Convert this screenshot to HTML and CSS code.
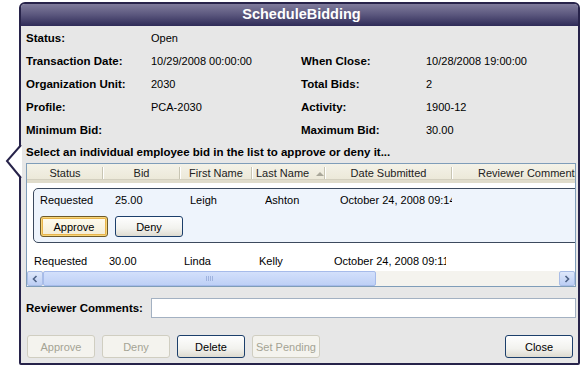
FILE: index.html
```html
<!DOCTYPE html>
<html>
<head>
<meta charset="utf-8">
<link rel="stylesheet" href="styles.css">
</head>
<body>
<div class="window">
  <svg class="callout" width="20" height="40" viewBox="0 0 20 40">
    <polygon points="17,0 3,16 17,33" fill="#ffffff" stroke="none"/>
    <polyline points="16,0 2,16 16,33" fill="none" stroke="#27234a" stroke-width="2"/>
  </svg>
  <div class="titlebar">ScheduleBidding</div>
  <div class="content">
    <div class="info">
      <span class="lbl">Status:</span><span>Open</span><span></span><span></span>
      <span class="lbl">Transaction Date:</span><span>10/29/2008 00:00:00</span><span class="lbl">When Close:</span><span>10/28/2008 19:00:00</span>
      <span class="lbl">Organization Unit:</span><span>2030</span><span class="lbl">Total Bids:</span><span>2</span>
      <span class="lbl">Profile:</span><span>PCA-2030</span><span class="lbl">Activity:</span><span>1900-12</span>
      <span class="lbl">Minimum Bid:</span><span></span><span class="lbl">Maximum Bid:</span><span>30.00</span>
    </div>
    <div class="hint">Select an individual employee bid in the list to approve or deny it...</div>
    <div class="grid">
      <div class="ghead">
        <div class="hc c1">Status</div>
        <div class="hc c2">Bid</div>
        <div class="hc c3">First Name</div>
        <div class="hc c4">Last Name <span class="sort"></span></div>
        <div class="hc c5">Date Submitted</div>
        <div class="hc c6">Reviewer Comments</div>
      </div>
      <div class="gbody">
        <div class="selrow">
          <div class="cells">
            <span class="cell">Requested</span><span class="cell">25.00</span><span class="cell">Leigh</span><span class="cell">Ashton</span><span class="cell date">October 24, 2008 09:14</span>
          </div>
          <div class="rowbtns">
            <button class="btn focus">Approve</button>
            <button class="btn">Deny</button>
          </div>
        </div>
        <div class="cells row2">
          <span class="cell">Requested</span><span class="cell">30.00</span><span class="cell">Linda</span><span class="cell">Kelly</span><span class="cell date">October 24, 2008 09:11</span>
        </div>
      </div>
      <div class="hscroll">
        <div class="sbtn"><svg width="8" height="8" viewBox="0 0 8 8"><polyline points="5.5,1 2.5,4 5.5,7" fill="none" stroke="#4d6185" stroke-width="1.6"/></svg></div>
        <div class="track"><div class="thumb"><span class="grip"></span></div></div>
        <div class="sbtn"><svg width="8" height="8" viewBox="0 0 8 8"><polyline points="2.5,1 5.5,4 2.5,7" fill="none" stroke="#4d6185" stroke-width="1.6"/></svg></div>
      </div>
    </div>
    <div class="comments">
      <span class="lbl">Reviewer Comments:</span>
      <div class="input"></div>
    </div>
    <div class="actions">
      <button class="btn big" disabled>Approve</button>
      <button class="btn big" disabled>Deny</button>
      <button class="btn big">Delete</button>
      <button class="btn big" disabled>Set Pending</button>
      <span class="spacer"></span>
      <button class="btn big">Close</button>
    </div>
  </div>
</div>
</body>
</html>
```

FILE: styles.css
```css
html, body {
  margin: 0;
  padding: 0;
  background: #ffffff;
}
body {
  font-family: "Liberation Sans", Arial, sans-serif;
  font-size: 11px;
  color: #000;
}
.window {
  position: relative;
  margin: 2px 0 0 19px;
  width: 557px;
  height: 359px;
  border: 2px solid #27234a;
  border-radius: 6px 6px 2px 2px;
  background: #e7e7e7;
  display: flex;
  flex-direction: column;
}
.callout {
  position: absolute;
  left: -16px;
  top: 141px;
}
.titlebar {
  height: 22px;
  line-height: 21px;
  text-align: center;
  color: #fff;
  font-weight: bold;
  font-size: 14.5px;
  background: linear-gradient(#7f7b9b 0%, #5e5a80 45%, #2f2b58 100%);
  border-radius: 4px 4px 0 0;
  padding-left: 4px;
}
.content {
  padding: 0 2px 5px 5px;
  display: flex;
  flex-direction: column;
}
.info {
  display: grid;
  grid-template-columns: 125px 150px 125px 1fr;
  grid-auto-rows: 23px;
  align-items: center;
}
.lbl {
  font-weight: bold;
  font-size: 11.5px;
}
.hint {
  height: 22px;
  line-height: 23px;
  font-weight: bold;
  font-size: 11.5px;
}
.grid {
  height: 122px;
  border: 1px solid #7f9db9;
  background: #ffffff;
  display: flex;
  flex-direction: column;
  overflow: hidden;
}
.ghead {
  height: 16px;
  display: flex;
  background: linear-gradient(#f4f2e8, #ece8d8);
  border-bottom: 3px solid #e0dccb;
  box-shadow: inset 0 -1px 0 #d3cfbf;
  white-space: nowrap;
}
.hc {
  position: relative;
  height: 16px;
  line-height: 18px;
  text-align: center;
  color: #222;
  flex: none;
}
.hc::after {
  content: "";
  position: absolute;
  right: 0;
  top: 3px;
  height: 12px;
  width: 1px;
  background: #c8c5b3;
  box-shadow: 1px 0 0 #fff;
}
.c1 { width: 76px; }
.c2 { width: 77px; }
.c3 { width: 72px; }
.c4 { text-align: left; padding-left: 4px; width: 69px; }
.c5 { width: 127px; }
.c6 { flex: 1; text-align: left; padding-left: 26px; overflow: hidden; }
.c6::after { display: none; }
.sort {
  display: inline-block;
  width: 0;
  height: 0;
  border-left: 4px solid transparent;
  border-right: 4px solid transparent;
  border-bottom: 4px solid #a9a79a;
  margin-left: 4px;
  vertical-align: 1px;
}
.gbody {
  height: 88px;
  overflow: hidden;
  display: flex;
  flex-direction: column;
}
.selrow {
  margin: 5px 0 0 6px;
  width: 560px;
  height: 50px;
  border: 1px solid #3c4a5e;
  border-radius: 5px;
  background: #eef4fc;
  padding: 3px 0 0 6px;
  flex: none;
}
.cells {
  display: flex;
  height: 16px;
  line-height: 16px;
  white-space: nowrap;
}
.cell {
  width: 75px;
  flex: none;
  overflow: hidden;
}
.cell.date {
  width: 112px;
}
.rowbtns {
  display: flex;
  gap: 7px;
  margin-top: 8px;
}
.btn {
  font-family: "Liberation Sans", Arial, sans-serif;
  font-size: 11px;
  width: 68px;
  height: 21px;
  padding: 0;
  color: #000;
  border: 1px solid #1c3f6b;
  border-radius: 3px;
  background: linear-gradient(#fefefe 0%, #f2f2ee 60%, #dedbd0 100%);
}
.btn.focus {
  box-shadow: inset 0 0 0 1px #f7d67a, inset 0 0 0 2px #e8b44c;
  border-color: #6e5a2a;
  background: linear-gradient(#fffcf0, #f3ecd4);
}
.row2 {
  margin-top: 10px;
  padding-left: 7px;
}
.hscroll {
  height: 15px;
  display: flex;
  background: #f4f3ee;
  flex: none;
}
.sbtn {
  width: 14px;
  height: 13px;
  border: 1px solid #a9bde6;
  border-radius: 2px;
  background: linear-gradient(#dfe8fb, #bccef4);
  display: flex;
  align-items: center;
  justify-content: center;
  flex: none;
}
.track {
  flex: 1;
  display: flex;
}
.thumb {
  width: 331px;
  height: 13px;
  border: 1px solid #a6bbea;
  border-radius: 2px;
  background: linear-gradient(#d3e0fb, #bed0f6);
  display: flex;
  align-items: center;
  justify-content: center;
}
.grip {
  width: 7px;
  height: 5px;
  background: repeating-linear-gradient(90deg, #9fb3de 0 1px, transparent 1px 2px);
}
.comments {
  margin-top: 11px;
  height: 20px;
  display: flex;
  align-items: center;
}
.comments .lbl {
  width: 125px;
  flex: none;
}
.input {
  width: 423px;
  height: 18px;
  border: 1px solid #a3b1c2;
  background: #fff;
}
.actions {
  margin-top: 17px;
  padding-left: 1px;
  padding-right: 3px;
  display: flex;
  gap: 7px;
  height: 23px;
}
.btn.big {
  height: 23px;
  width: 68px;
}
.btn:disabled {
  color: #a4a394;
  border-color: #d0cec1;
  background: #f4f3ee;
}
.spacer {
  flex: 1;
}
```
